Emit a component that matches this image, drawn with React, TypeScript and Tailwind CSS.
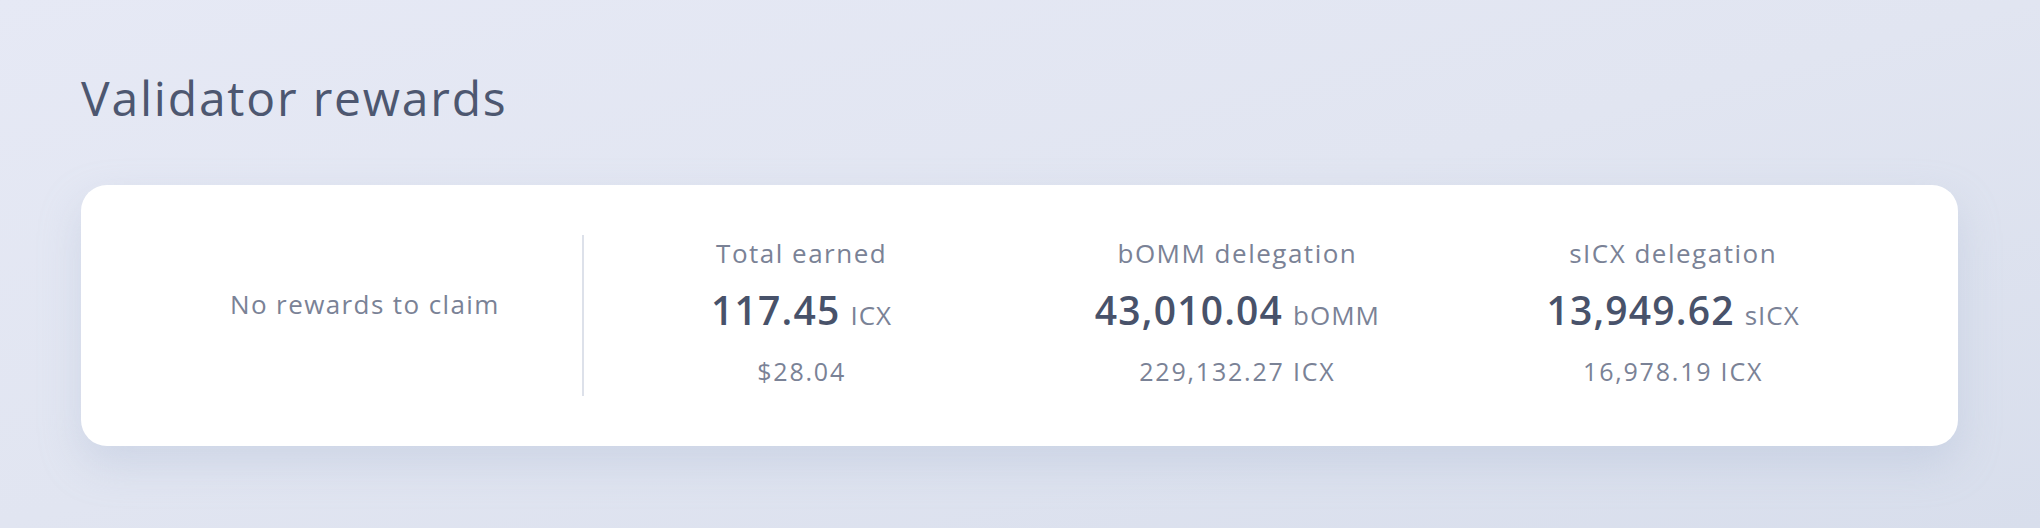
const stats = [
  { label: "Total earned", value: "117.45", unit: "ICX", sub: "$28.04" },
  { label: "bOMM delegation", value: "43,010.04", unit: "bOMM", sub: "229,132.27 ICX" },
  { label: "sICX delegation", value: "13,949.62", unit: "sICX", sub: "16,978.19 ICX" },
];

const App = () => {
  return (
    <div
      className="w-[2040px] h-[528px] overflow-hidden bg-gradient-to-br from-[#e6e9f5] via-[#e1e5f1] to-[#d8deec] px-[81px] pt-[64px]"
      style={{ fontFamily: "'Open Sans', Lato, sans-serif" }}
    >
      {/* Title */}
      <h2 className="text-[48px] leading-[68px] text-[#4d5770] tracking-[1.8px]">Validator rewards</h2>

      {/* Rewards card */}
      <div className="mt-[53px] mr-[1px] bg-white rounded-[26px] shadow-[0_18px_40px_rgba(170,182,210,0.35)] px-[67px] py-[50px] grid grid-cols-4">
        <div className="border-r-2 border-[#dde1ea] h-[161px] flex items-center justify-center pb-[22px]">
          <p className="text-[26px] text-[#7a8296] tracking-[1.4px]">No rewards to claim</p>
        </div>

        {stats.map((s) => (
          <div key={s.label} className="flex flex-col items-center">
            <p className="text-[26px] leading-[36px] text-[#7a8296] tracking-[1.5px]">{s.label}</p>
            <p className="mt-[15px] leading-[48px] text-[#48526a] whitespace-nowrap">
              <span className="text-[39px] font-semibold tracking-[1.2px]">{s.value}</span>
              <span className="ml-[10px] text-[26px] text-[#7a8296] tracking-[1px]">{s.unit}</span>
            </p>
            <p className="mt-[11px] text-[25px] leading-[34px] text-[#7a8296] tracking-[1.8px]">{s.sub}</p>
          </div>
        ))}
      </div>
    </div>
  );
};

export default App;
